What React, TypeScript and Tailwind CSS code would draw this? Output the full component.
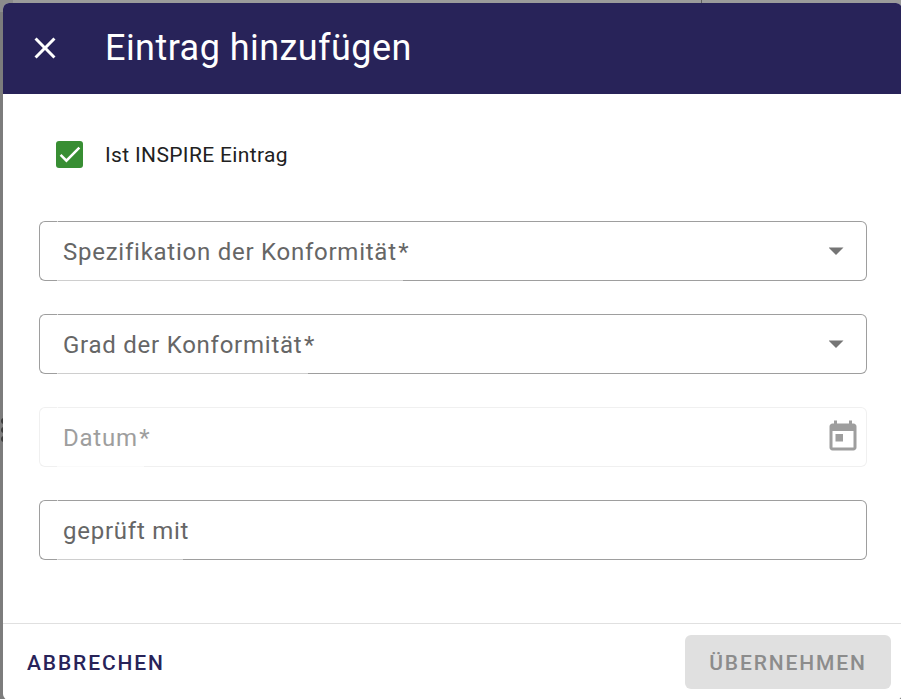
import type { ReactNode } from 'react';

type FieldProps = {
  label: string;
  notch?: string;
  required?: boolean;
  disabled?: boolean;
  children?: ReactNode;
};

function Field({ label, notch = '', required = false, disabled = false, children }: FieldProps) {
  const border = disabled ? 'border-[#f0f0f0]' : 'border-[#9e9e9e]';
  const faint = disabled ? 'border-b-[#fafafa]' : 'border-b-[#cecece]';
  const seam = disabled ? 'border-[#fafafa]' : 'border-[#dedede]';
  return (
    <div className="relative flex h-[60px] items-center justify-between">
      <div className="absolute inset-0 flex">
        <div className={`w-[18px] rounded-l-[6px] border border-r-0 ${border}`} />
        <div className={`w-px border-y ${seam}`} />
        <div className={`border-y ${border} ${faint} ${notch}`} />
        <div className={`flex-1 rounded-r-[6px] border border-l-0 ${border}`} />
      </div>
      <span
        className={`relative pl-6 pt-px text-[24px] leading-[36px] tracking-[0.75px] ${
          disabled ? 'text-[#9e9e9e]' : 'text-[#666666]'
        }`}
      >
        {label}
        {required && <span className="ml-[1.5px]">*</span>}
      </span>
      {children}
    </div>
  );
}

function Arrow() {
  return (
    <svg className="relative mr-[23px] h-[8px] w-[15px]" viewBox="0 0 15 8">
      <path d="M-.5 .5h15L7 8z" fill="#757575" />
    </svg>
  );
}

export default function App() {
  return (
    <div className="relative flex h-[699px] w-[901px] overflow-hidden bg-[#7c7c7c] pl-[3px] font-['Roboto',sans-serif]">
      <div className="absolute left-[13px] top-0 h-[12px] w-[888px] bg-[#9b9b9b]" />
      <div className="absolute left-0 top-0 h-[12px] w-[13px] bg-[#8c8c8c]" />
      <div className="absolute left-[701px] top-0 h-[3px] w-px bg-[#606060]" />
      <div className="absolute left-px top-[418px] flex flex-col gap-[3px]">
        <div className="size-[6px] rounded-full bg-[#3c3c3c]" />
        <div className="size-[6px] rounded-full bg-[#3c3c3c]" />
        <div className="size-[6px] rounded-full bg-[#3c3c3c]" />
      </div>
      <div className="relative mt-[3px] flex h-[697px] w-[899px] shrink-0 flex-col overflow-hidden rounded-[6px] bg-white">
        <header className="flex h-[91px] shrink-0 items-center bg-[#282359] pb-px pl-6 text-white">
          <svg className="size-9" viewBox="0 0 24 24" fill="currentColor">
            <path d="M19 6.41 17.59 5 12 10.59 6.41 5 5 6.41 10.59 12 5 17.59 6.41 19 12 13.41 17.59 19 19 17.59 13.41 12z" />
          </svg>
          <h1 className="ml-[42px] text-[36px] leading-[48px] tracking-[0.45px]">Eintrag hinzufügen</h1>
        </header>

        <main className="flex h-[529px] shrink-0 flex-col pl-9 pr-[35px]">
          <label className="mt-[47px] flex h-[27px] items-center pl-[17px]">
            <span className="flex size-[27px] items-start justify-center rounded-[3px] bg-[#388e33] pt-[2px]">
              <svg className="size-[22px]" viewBox="0 0 24 24" fill="none" stroke="#fff" strokeWidth="2.7">
                <path d="M1.73 12.91 8.1 19.28 22.2 5.18" />
              </svg>
            </span>
            <span className="ml-[22px] text-[21px] leading-[30px] tracking-[0.35px] text-[#212121]">
              Ist INSPIRE Eintrag
            </span>
          </label>
          <div className="mt-[53px] flex flex-col gap-[33px]">
            <Field label="Spezifikation der Konformität" notch="w-[345px]" required>
              <Arrow />
            </Field>
            <Field label="Grad der Konformität" notch="w-[250px]" required>
              <Arrow />
            </Field>
            <Field label="Datum" notch="w-[86px]" required disabled>
              <svg className="relative mb-px mr-[6px] size-9" viewBox="0 0 24 24" fill="#9e9e9e">
                <path d="M19 3h-1V1h-2v2H8V1H6v2H5c-1.11 0-1.99.9-1.99 2L3 19c0 1.1.89 2 2 2h14c1.1 0 2-.9 2-2V5c0-1.1-.9-2-2-2zm0 16H5V8h14v11zM7 10h5v5H7z" />
              </svg>
            </Field>
            <Field label="geprüft mit" notch="w-[125px]" />
          </div>
        </main>

        <footer className="flex h-[77px] shrink-0 items-center justify-between border-t border-[#e0e0e0] pl-6 pr-[11px] text-[21px] font-medium leading-[52px] tracking-[1.875px]">
          <button className="h-[54px] pt-[2px] text-[#282359]">ABBRECHEN</button>
          <button className="h-[54px] w-[206px] rounded-[6px] bg-[#e0e0e0] pt-[2px] text-[#8c8c8c]">
            ÜBERNEHMEN
          </button>
        </footer>
      </div>
    </div>
  );
}
